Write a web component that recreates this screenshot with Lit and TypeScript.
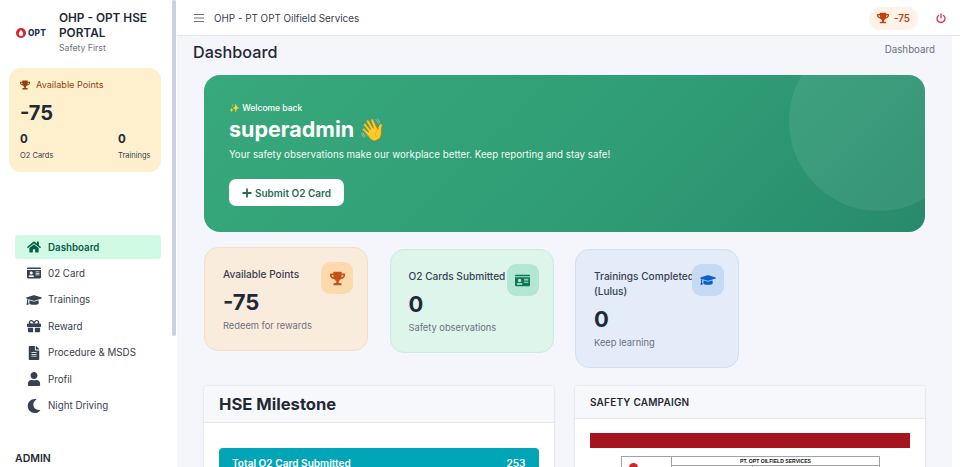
import { LitElement, html, css, svg } from "lit";
import { customElement } from "lit/decorators.js";

// font awesome style glyphs, [viewBox width, path]
const ICONS: Record<string, [number, string]> = {
  home: [576, "M280.37 148.26L96 300.11V464a16 16 0 0 0 16 16l112.06-.29a16 16 0 0 0 15.92-16V368a16 16 0 0 1 16-16h64a16 16 0 0 1 16 16v95.64a16 16 0 0 0 16 16.05L464 480a16 16 0 0 0 16-16V300L295.67 148.26a12.19 12.19 0 0 0-15.3 0zM571.6 251.47L488 182.56V44.05a12 12 0 0 0-12-12h-56a12 12 0 0 0-12 12v72.61L318.47 43a48 48 0 0 0-61 0L4.34 251.47a12 12 0 0 0-1.6 16.9l25.5 31A12 12 0 0 0 45.15 301l235.22-193.74a12.19 12.19 0 0 1 15.3 0L530.9 301a12 12 0 0 0 16.9-1.6l25.5-31a12 12 0 0 0-1.7-16.93z"],
  card: [576, "M528 32H48C21.5 32 0 53.5 0 80v16h576V80c0-26.5-21.5-48-48-48zM0 432c0 26.5 21.5 48 48 48h480c26.5 0 48-21.5 48-48V128H0v304zm352-232c0-4.4 3.6-8 8-8h144c4.4 0 8 3.6 8 8v16c0 4.4-3.6 8-8 8H360c-4.4 0-8-3.6-8-8v-16zm0 64c0-4.4 3.6-8 8-8h144c4.4 0 8 3.6 8 8v16c0 4.4-3.6 8-8 8H360c-4.4 0-8-3.6-8-8v-16zm0 64c0-4.4 3.6-8 8-8h144c4.4 0 8 3.6 8 8v16c0 4.4-3.6 8-8 8H360c-4.4 0-8-3.6-8-8v-16zM176 192c35.3 0 64 28.7 64 64s-28.7 64-64 64-64-28.7-64-64 28.7-64 64-64zM67.1 396.2C75.5 370.5 99.6 352 128 352h8.2c12.3 5.1 25.7 8 39.8 8s27.6-2.9 39.8-8h8.2c28.4 0 52.5 18.5 60.9 44.2 3.2 9.9-5.2 19.8-15.6 19.8H82.7c-10.4 0-18.8-10-15.6-19.8z"],
  cap: [640, "M622.34 153.2L343.4 67.5c-15.2-4.67-31.6-4.67-46.79 0L17.66 153.2c-23.54 7.23-23.54 38.36 0 45.59l48.63 14.94c-10.67 13.19-17.23 29.28-17.88 46.9C38.78 266.15 32 276.11 32 288c0 10.78 5.68 19.85 13.86 25.65L20.33 428.53C18.11 438.52 25.71 448 35.94 448h56.11c10.24 0 17.84-9.48 15.62-19.47L82.14 313.65C90.32 307.85 96 298.78 96 288c0-11.57-6.47-21.25-15.66-26.87.76-15.02 8.44-28.3 20.69-36.72L296.6 284.5c9.06 2.78 26.44 6.25 46.79 0l278.95-85.7c23.55-7.24 23.55-38.36 0-45.6zM352.79 315.09c-28.53 8.76-52.84 3.92-65.59 0l-145.02-44.55L128 384c0 35.35 85.96 64 192 64s192-28.65 192-64l-14.18-113.47-145.03 44.56z"],
  gift: [512, "M32 448c0 17.7 14.3 32 32 32h160V320H32v128zm256 32h160c17.7 0 32-14.3 32-32V320H288v160zm192-320h-42.1c6.2-12.1 10.1-25.5 10.1-40 0-48.5-39.5-88-88-88-41.6 0-68.5 21.3-103 68.3-34.5-47-61.4-68.3-103-68.3-48.5 0-88 39.5-88 88 0 14.5 3.8 27.9 10.1 40H32c-17.7 0-32 14.3-32 32v80c0 8.8 7.2 16 16 16h480c8.8 0 16-7.2 16-16v-80c0-17.7-14.3-32-32-32zm-326.1 0c-22.1 0-40-17.9-40-40s17.9-40 40-40c19.9 0 34.6 3.3 86.1 80h-86.1zm206.1 0h-86.1c51.4-76.5 65.7-80 86.1-80 22.1 0 40 17.9 40 40s-17.9 40-40 40z"],
  file: [384, "M224 136V0H24C10.7 0 0 10.7 0 24v464c0 13.3 10.7 24 24 24h336c13.3 0 24-10.7 24-24V160H248c-13.2 0-24-10.8-24-24zm64 236c0 6.6-5.4 12-12 12H108c-6.6 0-12-5.4-12-12v-8c0-6.6 5.4-12 12-12h168c6.6 0 12 5.4 12 12v8zm0-64c0 6.6-5.4 12-12 12H108c-6.6 0-12-5.4-12-12v-8c0-6.6 5.4-12 12-12h168c6.6 0 12 5.4 12 12v8zm0-72v8c0 6.6-5.4 12-12 12H108c-6.6 0-12-5.4-12-12v-8c0-6.6 5.4-12 12-12h168c6.6 0 12 5.4 12 12zm96-114.1v6.1H256V0h6.1c6.4 0 12.5 2.5 17 7l97.9 98c4.5 4.5 7 10.6 7 16.9z"],
  user: [448, "M224 256c70.7 0 128-57.3 128-128S294.7 0 224 0 96 57.3 96 128s57.3 128 128 128zm89.6 32h-16.7c-22.2 10.2-46.9 16-72.9 16s-50.6-5.8-72.9-16h-16.7C60.2 288 0 348.2 0 422.4V464c0 26.5 21.5 48 48 48h352c26.5 0 48-21.5 48-48v-41.6c0-74.2-60.2-134.4-134.4-134.4z"],
  moon: [512, "M283.211 512c78.962 0 151.079-35.925 198.857-94.792 7.068-8.708-.639-21.43-11.562-19.35-124.203 23.654-238.262-71.576-238.262-196.954 0-72.222 38.662-138.635 101.498-174.394 9.686-5.512 7.25-20.197-3.756-22.23A258.156 258.156 0 0 0 283.211 0c-141.309 0-256 114.511-256 256 0 141.309 114.511 256 256 256z"],
  trophy: [576, "M552 64H448V24c0-13.3-10.7-24-24-24H152c-13.3 0-24 10.7-24 24v40H24C10.7 64 0 74.7 0 88v56c0 35.7 22.5 72.4 61.9 100.7 31.5 22.7 69.8 37.1 110 41.7C203.3 338.5 240 360 240 360v72h-48c-35.3 0-64 20.7-64 56v12c0 6.6 5.4 12 12 12h296c6.6 0 12-5.4 12-12v-12c0-35.3-28.7-56-64-56h-48v-72s36.7-21.5 68.1-73.6c40.3-4.6 78.6-19 110-41.7 39.3-28.3 61.9-65 61.9-100.7V88c0-13.3-10.7-24-24-24zM99.3 192.8C74.9 175.2 64 155.6 64 144v-16h64.2c1 32.6 5.8 61.2 12.8 86.2-15.1-5.2-29.2-12.4-41.7-21.4zM512 144c0 16.1-17.7 36.1-35.3 48.8-12.5 9-26.7 16.2-41.8 21.4 7-25 11.8-53.6 12.8-86.2H512v16z"],
};

const icon = (name: string, size: number) => {
  const [w, d] = ICONS[name];
  return html`<svg width=${size} height=${size} viewBox="0 0 ${w} 512" fill="currentColor">${svg`<path d=${d}></path>`}</svg>`;
};

const NAV = [
  { label: "Dashboard", icon: "home", size: 14, active: true },
  { label: "02 Card", icon: "card", size: 14 },
  { label: "Trainings", icon: "cap", size: 16 },
  { label: "Reward", icon: "gift", size: 14 },
  { label: "Procedure & MSDS", icon: "file", size: 14 },
  { label: "Profil", icon: "user", size: 14 },
  { label: "Night Driving", icon: "moon", size: 14 },
];

@customElement("app-root")
export class AppRoot extends LitElement {
  static styles = css`
    :host {
      display: flex;
      height: 467px;
      overflow: hidden;
      background: #fff;
      font-family: Inter, "Liberation Sans", sans-serif;
      color: #1f2937;
    }
    .sidebar {
      width: 177px;
      flex: none;
      position: relative;
      overflow: hidden;
    }
    .thumb {
      position: absolute;
      left: 172px;
      top: 0;
      width: 4px;
      height: 336px;
      border-radius: 2px;
      background: #ccd2dc;
    }
    .brand {
      display: flex;
      align-items: center;
      height: 68px;
      padding: 0 0 2px 16px;
      box-sizing: border-box;
    }
    .logo {
      width: 43px;
      flex: none;
      display: flex;
      align-items: center;
      gap: 2px;
      font-size: 8.3px;
      font-weight: 800;
      letter-spacing: 0.2px;
      color: #27315a;
    }
    .brand-name {
      font-size: 11.8px;
      font-weight: 600;
      line-height: 15px;
      color: #1f2937;
      width: 100px;
    }
    .brand-sub {
      font-size: 8.7px;
      line-height: 14px;
      color: #6b7280;
    }
    .points {
      margin-left: 9px;
      width: 152px;
      height: 104px;
      box-sizing: border-box;
      padding: 10px 11px;
      border-radius: 12px;
      background: #fef0cd;
    }
    .points-head {
      display: flex;
      align-items: center;
      gap: 6px;
      font-size: 9.1px;
      line-height: 14px;
      color: #92400e;
    }
    .points-val {
      font-size: 20px;
      font-weight: 700;
      line-height: 24px;
      margin-top: 9px;
      color: #1f2937;
    }
    .points-row {
      display: flex;
      margin-top: 7px;
    }
    .points-row div {
      flex: none;
      width: 98px;
    }
    .points-row b {
      display: block;
      font-size: 11.5px;
      line-height: 15px;
      font-weight: 700;
    }
    .points-row span {
      display: block;
      font-size: 7.5px;
      line-height: 10px;
      margin-top: 4px;
      color: #374151;
    }
    .nav {
      margin: 63px 0 0 15px;
      width: 146px;
    }
    .item {
      display: flex;
      align-items: center;
      height: 24px;
      margin-bottom: 2.45px;
      padding-left: 11px;
      border-radius: 3px;
      font-size: 9.75px;
      color: #374151;
    }
    .item .ic {
      width: 16px;
      margin-right: 6px;
      display: flex;
      justify-content: center;
    }
    .item.active {
      background: #d1fae5;
      color: #065f46;
      font-weight: 600;
    }
    .admin {
      margin: 34px 0 0 15px;
      font-size: 10.5px;
      font-weight: 600;
      color: #1f2937;
    }
    .main {
      flex: 1;
      min-width: 0;
    }
    .topbar {
      height: 36px;
      box-sizing: border-box;
      border-bottom: 1px solid #e5e7eb;
      display: flex;
      align-items: center;
      padding: 1px 14px 0 17px;
      font-size: 9.85px;
      color: #374151;
    }
    .bars {
      display: flex;
      margin-right: 10px;
      color: #6b7280;
    }
    .topbar .title {
      flex: 1;
    }
    .badge {
      display: flex;
      align-items: center;
      gap: 5px;
      height: 23px;
      padding: 0 8px;
      border-radius: 12px;
      background: #fff3e8;
      color: #c2410c;
      font-weight: 600;
      margin-right: 18px;
    }
    .power {
      display: flex;
      color: #dc3545;
    }
    .content {
      width: 775px;
      height: 431px;
      overflow: hidden;
      background: #f4f6fb;
    }
    .head {
      display: flex;
      justify-content: space-between;
      padding: 4px 17px 0 16px;
      height: 35px;
      box-sizing: border-box;
    }
    .head h1 {
      margin: 0;
      font-size: 16.2px;
      font-weight: 500;
      line-height: 24px;
      color: #1f2937;
    }
    .head span {
      font-size: 9.75px;
      line-height: 20px;
      color: #6b7280;
    }
    .body {
      padding: 4px 27px 0;
    }
    .hero {
      position: relative;
      overflow: hidden;
      height: 157px;
      box-sizing: border-box;
      padding: 27px 25px;
      border-radius: 16px;
      background: linear-gradient(135deg, #38a97c 0%, #2f9c75 60%, #278a6c 100%);
      color: #fff;
    }
    .circle {
      position: absolute;
      width: 180px;
      height: 180px;
      top: -44px;
      right: -44px;
      border-radius: 50%;
      background: rgba(255, 255, 255, 0.08);
    }
    .hello {
      font-size: 8.5px;
      font-weight: 500;
      line-height: 13px;
    }
    .hero h2 {
      margin: 0;
      font-size: 21.5px;
      font-weight: 700;
      line-height: 28px;
    }
    .hero p {
      margin: 4px 0 0;
      font-size: 9.75px;
      line-height: 16px;
      color: #f0fdf6;
    }
    .btn {
      display: inline-flex;
      align-items: center;
      justify-content: center;
      gap: 3px;
      margin-top: 16px;
      width: 115px;
      height: 27px;
      border-radius: 7px;
      background: #fff;
      color: #1f6f54;
      font-size: 10px;
      font-weight: 600;
    }
    .stats {
      display: flex;
      align-items: flex-start;
      gap: 21.5px;
      margin-top: 17px;
    }
    .stat {
      position: relative;
      width: 164px;
      box-sizing: border-box;
      padding: 18.5px 18px 17px;
      border-radius: 14px;
      border: 1px solid;
    }
    .stat.orange {
      background: #faecdc;
      border-color: #f4dfc6;
      margin-top: -2px;
    }
    .stat.green {
      background: #def5ec;
      border-color: #c9ebdf;
    }
    .stat.blue {
      background: #e3ecf8;
      border-color: #d3e0f1;
    }
    .stat-ic {
      position: absolute;
      top: 14px;
      right: 14px;
      width: 32px;
      height: 32px;
      border-radius: 9px;
      display: flex;
      align-items: center;
      justify-content: center;
    }
    .orange .stat-ic { background: #fdd9ae; color: #c2541a; }
    .green .stat-ic { background: #b3e6d3; color: #0a7a56; }
    .blue .stat-ic { background: #c5daf3; color: #0f5fc9; }
    .stat-t {
      font-size: 10.1px;
      font-weight: 500;
      line-height: 15px;
      color: #374151;
    }
    .stat-v {
      font-size: 22px;
      font-weight: 700;
      line-height: 28px;
      margin-top: 6px;
      color: #1f2937;
    }
    .stat-s {
      font-size: 9.3px;
      line-height: 14px;
      margin-top: 3.5px;
      color: #6b7280;
    }
    .panels {
      display: flex;
      gap: 21.5px;
      margin-top: 18px;
    }
    .panel {
      width: 349.5px;
      height: 120px;
      background: #fff;
      border-radius: 3px;
      box-shadow: 0 0 2px rgba(0, 0, 0, 0.18);
      overflow: hidden;
    }
    .panel-h {
      height: 37px;
      box-sizing: border-box;
      display: flex;
      align-items: center;
      padding: 0 15px;
      background: #f7f8fb;
      border-bottom: 1px solid #e5e7eb;
      font-weight: 700;
      color: #1f2a37;
    }
    .panel-h.big { font-size: 16.6px; font-weight: 700; }
    .panel-h.small { font-size: 10px; font-weight: 600; letter-spacing: 0.2px; height: 33px; }
    .total {
      margin: 25px 15px 0;
      height: 40px;
      padding: 9px 13px;
      box-sizing: border-box;
      display: flex;
      justify-content: space-between;
      border-radius: 4px;
      background: #00a5b8;
      color: #fff;
      font-size: 10.1px;
      font-weight: 600;
    }
    .banner {
      margin: 14px 15px 0;
      height: 15px;
      background: #a5141f;
    }
    .doc {
      margin: 8px 0 0 46px;
      width: 259px;
      height: 40px;
      box-sizing: border-box;
      border: 1px solid #9ca3af;
      display: grid;
      grid-template-columns: 50px 1fr;
      font-family: "Liberation Sans", sans-serif;
    }
    .doc-logo {
      border-right: 1px solid #9ca3af;
      padding: 6px 0 0 7px;
    }
    .doc-logo i {
      display: block;
      width: 9px;
      height: 9px;
      border-radius: 50%;
      background: #d0282e;
    }
    .doc-head {
      border-bottom: 1px solid #9ca3af;
      height: 8px;
      font-size: 5.1px;
      font-weight: 700;
      line-height: 8px;
      text-align: center;
      color: #111;
    }
    .doc-cell {
      width: 80px;
      height: 100%;
      border-right: 1px solid #9ca3af;
    }
  `;

  render() {
    return html`
      <aside class="sidebar">
        <div class="brand">
          <div class="logo">
            <svg width="10" height="10" viewBox="0 0 10 10">
              <circle cx="5" cy="5" r="5" fill="#d8232a"></circle>
              <path d="M5 1.8C6.4 3.6 7.2 4.6 7.2 5.9A2.2 2.2 0 0 1 2.8 5.9C2.8 4.6 3.6 3.6 5 1.8Z" fill="#fff"></path>
            </svg>
            OPT
          </div>
          <div>
            <div class="brand-name">OHP - OPT HSE PORTAL</div>
            <div class="brand-sub">Safety First</div>
          </div>
        </div>
        <div class="points">
          <div class="points-head">${icon("trophy", 10)} Available Points</div>
          <div class="points-val">-75</div>
          <div class="points-row">
            <div><b>0</b><span>O2 Cards</span></div>
            <div><b>0</b><span>Trainings</span></div>
          </div>
        </div>
        <nav class="nav">
          ${NAV.map(
            (n) => html`<div class="item ${n.active ? "active" : ""}">
              <span class="ic">${icon(n.icon, n.size)}</span>${n.label}
            </div>`
          )}
        </nav>
        <div class="admin">ADMIN</div>
        <div class="thumb"></div>
      </aside>
      <div class="main">
        <header class="topbar">
          <span class="bars">
            <svg width="10" height="10" viewBox="0 0 10 10" stroke="currentColor" stroke-width="1">
              <path d="M0 1.5H10M0 5H10M0 8.5H10"></path>
            </svg>
          </span>
          <span class="title">OHP - PT OPT Oilfield Services</span>
          <span class="badge">${icon("trophy", 12)} -75</span>
          <span class="power">
            <svg width="10" height="11" viewBox="0 0 10 11" fill="none" stroke="currentColor" stroke-width="1.3" stroke-linecap="round">
              <path d="M5 .8V5M2.5 2.4A4 4 0 1 0 7.5 2.4"></path>
            </svg>
          </span>
        </header>
        <div class="content">
          <div class="head">
            <h1>Dashboard</h1>
            <span>Dashboard</span>
          </div>
          <div class="body">
            <section class="hero">
              <div class="circle"></div>
              <div class="hello">✨ Welcome back</div>
              <h2>superadmin 👋</h2>
              <p>Your safety observations make our workplace better. Keep reporting and stay safe!</p>
              <div class="btn">
                <svg width="10" height="10" viewBox="0 0 10 10" stroke="currentColor" stroke-width="1.8">
                  <path d="M5 .5V9.5M.5 5H9.5"></path>
                </svg>
                Submit O2 Card
              </div>
            </section>
            <div class="stats">
              <div class="stat orange">
                <div class="stat-ic">${icon("trophy", 15)}</div>
                <div class="stat-t">Available Points</div>
                <div class="stat-v">-75</div>
                <div class="stat-s">Redeem for rewards</div>
              </div>
              <div class="stat green">
                <div class="stat-ic">${icon("card", 15)}</div>
                <div class="stat-t">O2 Cards Submitted</div>
                <div class="stat-v">0</div>
                <div class="stat-s">Safety observations</div>
              </div>
              <div class="stat blue">
                <div class="stat-ic">${icon("cap", 16)}</div>
                <div class="stat-t">Trainings Completed (Lulus)</div>
                <div class="stat-v">0</div>
                <div class="stat-s">Keep learning</div>
              </div>
            </div>
            <div class="panels">
              <div class="panel">
                <div class="panel-h big">HSE Milestone</div>
                <div class="total"><span>Total O2 Card Submitted</span><span>253</span></div>
              </div>
              <div class="panel">
                <div class="panel-h small">SAFETY CAMPAIGN</div>
                <div class="banner"></div>
                <div class="doc">
                  <div class="doc-logo"><i></i></div>
                  <div>
                    <div class="doc-head">PT. OPT OILFIELD SERVICES</div>
                    <div class="doc-cell"></div>
                  </div>
                </div>
              </div>
            </div>
          </div>
        </div>
      </div>
    `;
  }
}
